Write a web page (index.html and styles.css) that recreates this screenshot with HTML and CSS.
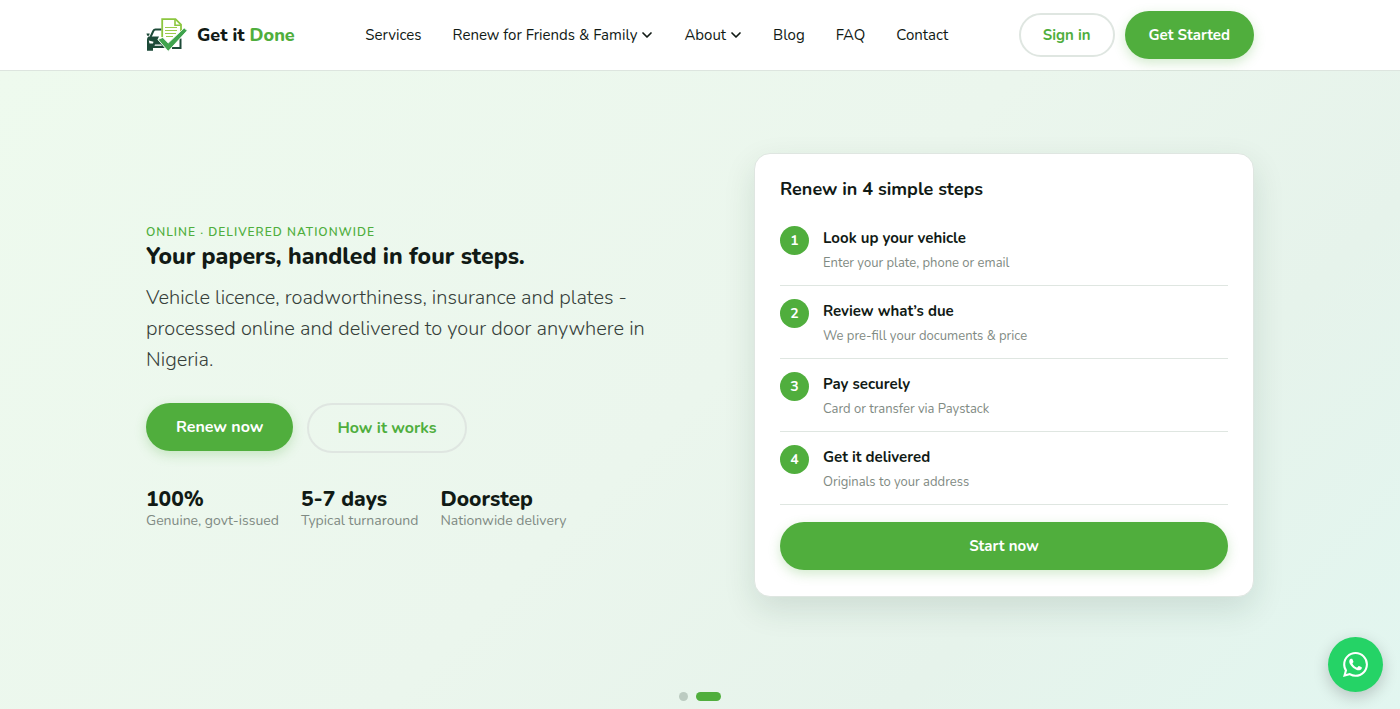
FILE: index.html
```html
<!DOCTYPE html>
<html lang="en">
<head>
	<meta charset="UTF-8">
	<meta name="viewport" content="width=device-width, initial-scale=1">
	<title>Get it Done</title>
	<link rel="stylesheet" href="styles.css">
</head>
<body>
<header class="header">
	<div class="container header-inner">
		<a class="logo" href="#">
			<svg class="logo-mark" viewBox="0 0 42 34" aria-hidden="true">
				<path d="M15.500 11.500H9.500q-1.500 0-2.200 1.500L4.500 19" fill="none" stroke="#1d4a38" stroke-width="2"/>
				<path d="M.5 15.500h3.200l-.7 2.300H1.200z" fill="#1d4a38"/>
				<path d="M2.500 18.500H13l-1.500 3L19 30H7v2.800H1V21.500q0-2 1.500-3z" fill="#1d4a38"/>
				<path d="M2.800 22.500l4.700 1.300-.5 1.700H3.500zM9 26.500h6l1 1.300H8.500z" fill="#fff"/>
				<path d="M34.500 20.500V30H26" fill="none" stroke="#1d4a38" stroke-width="2"/>
				<path d="M16 1.200h13.500l5.500 5.500V16L22.500 26 16 19.500z" fill="#fff"/>
				<path d="M16.200 19V1.200h13.300L35 6.700V14" fill="none" stroke="#8cc63f" stroke-width="1.800"/>
				<path d="M29 1.200v6h6" fill="none" stroke="#8cc63f" stroke-width="1.600"/>
				<path d="M19 9.500h12M19 12.500h12M19 15.500h11M20 18.500h7" stroke="#9bcb4d" stroke-width="1.200"/>
				<path d="M12 21.500l4.800-2 5.400 5.600L38.200 10l3 2.600L22.200 33.300z" fill="#3fa34d" stroke="#fff" stroke-width=".8"/>
			</svg>
			<span>Get it <span class="logo-green">Done</span></span>
		</a>
		<nav class="nav">
			<a href="#">Services</a>
			<a href="#">Renew for Friends &amp; Family
				<svg class="chevron" viewBox="0 0 12 12" aria-hidden="true"><path d="M2 4l4 4 4-4"/></svg>
			</a>
			<a href="#">About
				<svg class="chevron" viewBox="0 0 12 12" aria-hidden="true"><path d="M2 4l4 4 4-4"/></svg>
			</a>
			<a href="#">Blog</a>
			<a href="#">FAQ</a>
			<a href="#">Contact</a>
		</nav>
		<div class="actions">
			<a class="btn btn-outline btn-small" href="#">Sign in</a>
			<a class="btn btn-primary" href="#">Get Started</a>
		</div>
	</div>
</header>

<main class="hero">
	<div class="container hero-grid">
		<div class="hero-text">
			<p class="eyebrow">Online · Delivered nationwide</p>
			<h1>Your papers, handled in four steps.</h1>
			<p class="lead">Vehicle licence, roadworthiness, insurance and plates - processed online and delivered to your door anywhere in Nigeria.</p>
			<div class="hero-buttons">
				<a class="btn btn-primary btn-large" href="#">Renew now</a>
				<a class="btn btn-outline btn-large" href="#">How it works</a>
			</div>
			<ul class="stats">
				<li><strong>100%</strong><span>Genuine, govt-issued</span></li>
				<li><strong>5-7 days</strong><span>Typical turnaround</span></li>
				<li><strong>Doorstep</strong><span>Nationwide delivery</span></li>
			</ul>
		</div>
		<section class="card">
			<h2>Renew in 4 simple steps</h2>
			<ol class="steps">
				<li>
					<span class="num">1</span>
					<div><h3>Look up your vehicle</h3><p>Enter your plate, phone or email</p></div>
				</li>
				<li>
					<span class="num">2</span>
					<div><h3>Review what’s due</h3><p>We pre-fill your documents &amp; price</p></div>
				</li>
				<li>
					<span class="num">3</span>
					<div><h3>Pay securely</h3><p>Card or transfer via Paystack</p></div>
				</li>
				<li>
					<span class="num">4</span>
					<div><h3>Get it delivered</h3><p>Originals to your address</p></div>
				</li>
			</ol>
			<a class="btn btn-primary btn-block" href="#">Start now</a>
		</section>
	</div>
	<div class="dots">
		<button class="dot" type="button" aria-label="Slide 1"></button>
		<button class="dot active" type="button" aria-label="Slide 2"></button>
	</div>
</main>

<a class="whatsapp" href="#" aria-label="Chat on WhatsApp">
	<svg viewBox="0 0 24 24" aria-hidden="true">
		<path d="M17.472 14.382c-.297-.149-1.758-.867-2.030-.967-.273-.099-.471-.148-.670.150-.197.297-.767.966-.940 1.164-.173.199-.347.223-.644.075-.297-.150-1.255-.463-2.390-1.475-.883-.788-1.480-1.761-1.653-2.059-.173-.297-.018-.458.130-.606.134-.133.298-.347.446-.520.149-.174.198-.298.298-.497.099-.198.050-.371-.025-.520-.075-.149-.669-1.612-.916-2.207-.242-.579-.487-.500-.669-.510-.173-.008-.371-.010-.570-.010-.198 0-.520.074-.792.372-.272.297-1.040 1.016-1.040 2.479 0 1.462 1.065 2.875 1.213 3.074.149.198 2.096 3.200 5.077 4.487.709.306 1.262.489 1.694.625.712.227 1.360.195 1.871.118.571-.085 1.758-.719 2.006-1.413.248-.694.248-1.289.173-1.413-.074-.124-.272-.198-.570-.347m-5.421 7.403h-.004a9.870 9.870 0 01-5.031-1.378l-.361-.214-3.741.982.998-3.648-.235-.374a9.860 9.860 0 01-1.510-5.260c.001-5.450 4.436-9.884 9.888-9.884 2.640 0 5.122 1.030 6.988 2.898a9.825 9.825 0 012.893 6.994c-.003 5.450-4.437 9.884-9.885 9.884m8.413-18.297A11.815 11.815 0 0012.050 0C5.495 0 .160 5.335.157 11.892c0 2.096.547 4.142 1.588 5.945L.057 24l6.305-1.654a11.882 11.882 0 005.683 1.448h.005c6.554 0 11.890-5.335 11.893-11.893a11.821 11.821 0 00-3.480-8.413z"/>
	</svg>
</a>
</body>
</html>
```
FILE: styles.css
```css
*{
	box-sizing: border-box;
}
body{
	margin: 0;
	min-height: 100vh;
	display: flex;
	flex-direction: column;
	font-family: Nunito, Lato, "Noto Sans", sans-serif;
	font-size: 15px;
	color: #111a15;
}
h1, h2, h3, p, ul, ol{
	margin: 0;
	padding: 0;
}
ul, ol{
	list-style: none;
}
a{
	color: inherit;
	text-decoration: none;
}
.container{
	width: 100%;
	max-width: 1156px;
	margin: 0 auto;
	padding: 0 24px;
}

/* header */
.header{
	background: #fff;
	border-bottom: 1px solid #dde5df;
}
.header-inner{
	display: flex;
	align-items: center;
	justify-content: space-between;
	height: 70px;
}
.logo{
	display: flex;
	align-items: center;
	gap: 9px;
	font-size: 18px;
	font-weight: 800;
}
.logo-mark{
	width: 42px;
	height: 34px;
}
.logo-green{
	color: #4fae3d;
}
.nav{
	display: flex;
	gap: 31px;
}
.nav a{
	display: flex;
	align-items: center;
	gap: 4px;
	white-space: nowrap;
}
.chevron{
	width: 12px;
	height: 12px;
	fill: none;
	stroke: currentColor;
	stroke-width: 1.7;
	stroke-linecap: round;
	stroke-linejoin: round;
}
.actions{
	display: flex;
	align-items: center;
	gap: 10px;
}

/* buttons */
.btn{
	display: inline-block;
	padding: 12px 24px;
	border-radius: 25px;
	font-size: 15px;
	line-height: 24px;
	font-weight: 700;
	text-align: center;
	white-space: nowrap;
}
.btn-primary{
	background: #50ae3d;
	color: #fff;
	box-shadow: 0 4px 12px rgba(80, 174, 61, .25);
}
.btn-outline{
	border: 2px solid #dfe6e1;
	color: #4fae3d;
}
.btn-small{
	padding: 8px 22px;
}
.btn-large{
	padding-left: 30px;
	padding-right: 30px;
	font-size: 16px;
}
.btn-block{
	display: block;
}

/* hero */
.hero{
	flex: 1;
	display: flex;
	flex-direction: column;
	justify-content: space-between;
	padding: 82px 0 8px;
	background: linear-gradient(135deg, #eefaee 0%, #ebf6ed 50%, #e6f3eb 75%, #e2f6f0 100%);
}
.hero-grid{
	display: grid;
	grid-template-columns: 11fr 10fr;
	gap: 58px;
	align-items: center;
}
.hero-text{
	padding-top: 3px;
}
.eyebrow{
	color: #4fae3d;
	font-size: 12px;
	line-height: 18px;
	font-weight: 600;
	letter-spacing: 1px;
	text-transform: uppercase;
}
h1{
	font-size: 23px;
	line-height: 32px;
	font-weight: 800;
}
.lead{
	max-width: 520px;
	margin-top: 9px;
	color: #36403a;
	font-size: 20px;
	line-height: 31px;
	font-weight: 300;
}
.hero-buttons{
	display: flex;
	align-items: flex-start;
	gap: 14px;
	margin-top: 28px;
}
.hero-buttons .btn-outline{
	padding: 11px 28px;
}
.stats{
	display: flex;
	gap: 22px;
	margin-top: 33px;
}
.stats strong{
	display: block;
	font-size: 21px;
	line-height: 26px;
	font-weight: 800;
}
.stats span{
	display: block;
	color: #7f8a83;
	font-size: 14px;
	line-height: 18px;
}

/* steps card */
.card{
	padding: 23px 25px 26px;
	background: #fff;
	border: 1px solid #dfe6e1;
	border-radius: 16px;
	box-shadow: 0 12px 32px rgba(20, 60, 40, .12);
}
.card h2{
	font-size: 18px;
	line-height: 24px;
	font-weight: 700;
}
.steps{
	margin: 12px 0 17px;
}
.steps li{
	display: flex;
	gap: 14px;
	height: 73px;
	padding-top: 13px;
	border-bottom: 1px solid #dfe6e1;
}
.num{
	width: 29px;
	height: 29px;
	border-radius: 50%;
	background: #50ae3d;
	color: #fff;
	font-size: 14px;
	line-height: 29px;
	font-weight: 700;
	text-align: center;
}
.steps h3{
	font-size: 15px;
	line-height: 24px;
	font-weight: 700;
}
.steps p{
	color: #7f8a83;
	font-size: 13px;
	line-height: 26px;
}

.dots{
	display: flex;
	justify-content: center;
	gap: 8px;
}
.dot{
	width: 9px;
	height: 9px;
	padding: 0;
	border: 0;
	border-radius: 5px;
	background: #bccbc1;
}
.dot.active{
	width: 25px;
	background: #50ae3d;
}

.whatsapp{
	position: fixed;
	right: 17px;
	bottom: 17px;
	display: flex;
	align-items: center;
	justify-content: center;
	width: 55px;
	height: 55px;
	border-radius: 50%;
	background: #25d366;
	box-shadow: 0 5px 16px rgba(0, 0, 0, .2);
}
.whatsapp svg{
	width: 25px;
	height: 25px;
	fill: #fff;
}
```
